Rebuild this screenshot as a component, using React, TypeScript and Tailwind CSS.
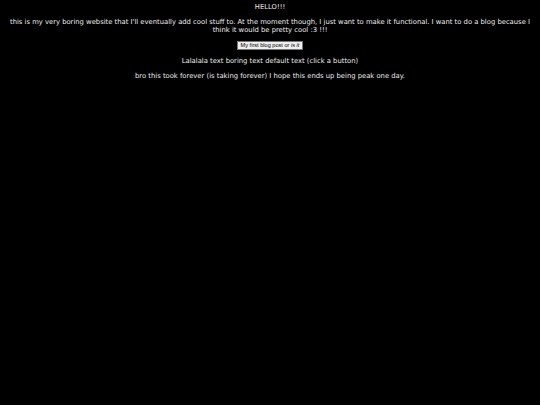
export default function App() {
  return (
    <div
      className="min-h-[405px] w-full bg-black px-2 text-center text-[6.8px] leading-[8px] text-[#ededed] antialiased"
      style={{ fontFamily: '"DejaVu Sans", Verdana, sans-serif' }}
    >
      <p className="pt-[3px]">HELLO!!!</p>
      <p className="mt-[7px]">
        this is my very boring website that I'll eventually add cool stuff to. At the moment though, I just want to
        make it functional. I want to do a blog because I think it would be pretty cool :3 !!!
      </p>
      <div className="mt-[7px] flex justify-center">
        <button
          className="h-[9px] border border-[#767676] bg-[#efefef] px-[3px] text-[5.6px] leading-[7px] text-black"
          style={{ fontFamily: '"Liberation Sans", Arial, sans-serif' }}
        >
          My first blog post <i>or is it</i>
        </button>
      </div>
      <p className="mt-[7px]">Lalalala text boring text default text (click a button)</p>
      <p className="mt-[7px]">bro this took forever (is taking forever) I hope this ends up being peak one day.</p>
    </div>
  );
}
